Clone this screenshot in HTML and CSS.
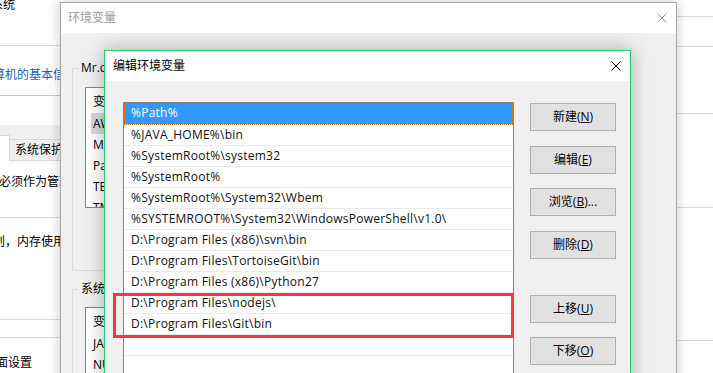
FILE: index.html
```html
<!doctype html>
<html lang="zh-CN">
    <head>
        <meta charset="UTF-8" />
        <title>编辑环境变量</title>
        <link rel="stylesheet" href="styles.css">
    </head>
    <body>
        <div class="desk">
            <!-- windows behind -->
            <div class="bg">
                <div class="bg-left">
                    <div class="cp-head"><span class="cp-crumb">系统</span></div>
                    <div class="cp-link"><span class="cp-link-text">计算机的基本信息</span></div>
                    <div class="sp-title"></div>
                    <div class="sp-tabs">
                        <div class="tab-sel"></div>
                        <div class="tab">系统保护</div>
                    </div>
                    <div class="sp-page">
                        <div class="pg pg-a"><span class="t-a">你必须作为管理员登录。</span></div>
                        <div class="pg pg-b"><span class="t-b">处理器计划，内存使用，以及虚拟内存</span></div>
                        <div class="pg pg-c"></div>
                        <div class="pg pg-d"><span class="t-d">桌面设置</span></div>
                    </div>
                </div>
                <div class="bg-right">
                    <div class="r r1"></div>
                    <div class="r r2"></div>
                    <div class="r r3"></div>
                    <div class="r r4"></div>
                    <div class="r r5"></div>
                </div>
            </div>

            <!-- 环境变量 -->
            <div class="win env">
                <div class="titlebar">
                    <span class="title">环境变量</span>
                    <span class="close">
                        <svg width="10" height="10" viewBox="0 0 10 10"><path d="M0.5 0.5L9.5 9.5M9.5 0.5L0.5 9.5" stroke="#9a9a9a" stroke-width="1" fill="none"/></svg>
                    </span>
                </div>
                <div class="env-body">
                    <fieldset class="group">
                        <legend>Mr.c 的用户变量(U)</legend>
                        <div class="lv">
                            <div class="lv-head">变量</div>
                            <div class="lv-row lv-sel">AWS_HOME</div>
                            <div class="lv-row">MAVEN_HOME</div>
                            <div class="lv-row">Path</div>
                            <div class="lv-row">TEMP</div>
                            <div class="lv-row">TMP</div>
                        </div>
                    </fieldset>
                    <fieldset class="group group-sys">
                        <legend>系统变量(S)</legend>
                        <div class="lv">
                            <div class="lv-head">变量</div>
                            <div class="lv-row">JAVA_HOME</div>
                            <div class="lv-row">NUMBER_OF_PROCESSORS</div>
                        </div>
                    </fieldset>
                </div>
            </div>

            <!-- 编辑环境变量 -->
            <div class="win edit">
                <div class="titlebar">
                    <span class="title">编辑环境变量</span>
                    <span class="close">
                        <svg width="10" height="10" viewBox="0 0 10 10"><path d="M0.5 0.5L9.5 9.5M9.5 0.5L0.5 9.5" stroke="#000" stroke-width="1" fill="none"/></svg>
                    </span>
                </div>
                <div class="edit-body">
                    <div class="lb">
                        <div class="lb-row sel">%Path%</div>
                        <div class="lb-row">%JAVA_HOME%\bin</div>
                        <div class="lb-row">%SystemRoot%\system32</div>
                        <div class="lb-row">%SystemRoot%</div>
                        <div class="lb-row">%SystemRoot%\System32\Wbem</div>
                        <div class="lb-row">%SYSTEMROOT%\System32\WindowsPowerShell\v1.0\</div>
                        <div class="lb-row">D:\Program Files (x86)\svn\bin</div>
                        <div class="lb-row">D:\Program Files\TortoiseGit\bin</div>
                        <div class="lb-row">D:\Program Files (x86)\Python27</div>
                        <div class="lb-row">D:\Program Files\nodejs\</div>
                        <div class="lb-row">D:\Program Files\Git\bin</div>
                        <div class="lb-row"></div>
                        <div class="lb-row"></div>
                    </div>
                    <div class="btns">
                        <div class="btn">新建(<u>N</u>)</div>
                        <div class="btn">编辑(<u>E</u>)</div>
                        <div class="btn">浏览(<u>B</u>)...</div>
                        <div class="btn">删除(<u>D</u>)</div>
                        <div class="btn btn-up">上移(<u>U</u>)</div>
                        <div class="btn">下移(<u>O</u>)</div>
                    </div>
                </div>
            </div>

            <div class="mark"></div>
        </div>
    </body>
</html>
```

FILE: styles.css
```css
* {
    box-sizing: border-box;
}

html,
body {
    margin: 0;
    padding: 0;
}

body {
    font-family: "Open Sans", "Noto Sans CJK SC", sans-serif;
    font-size: 12px;
    color: #000;
    background: #fff;
}

.desk {
    position: relative;
    width: 713px;
    height: 373px;
    overflow: hidden;
    background: #fff;
}

/* background windows */
.bg {
    display: flex;
    justify-content: space-between;
    height: 100%;
}

.bg-left {
    width: 70px;
    overflow: hidden;
    white-space: nowrap;
}

.cp-head {
    height: 46px;
    border-bottom: 1px solid #dadada;
}

.cp-crumb {
    display: block;
    line-height: 9px;
    margin-left: -9px;
}

.cp-link {
    height: 50px;
    padding-top: 21px;
    border-bottom: 1px solid #c8c8c8;
}

.cp-link-text {
    display: block;
    line-height: 16px;
    margin-left: -19px;
    color: #1a5fb4;
}

.sp-title {
    height: 29px;
    background: #fff;
}

.sp-tabs {
    display: flex;
    align-items: flex-end;
    height: 36px;
    background: #f0f0f0;
    border-bottom: 1px solid #d9d9d9;
}

.tab-sel {
    width: 16px;
    height: 26px;
    margin-bottom: -1px;
    background: #fff;
    border-top: 1px solid #d9d9d9;
    border-right: 1px solid #d9d9d9;
}

.tab {
    height: 21px;
    padding: 0 6px 0 5px;
    line-height: 20px;
    background: #f0f0f0;
    border-top: 1px solid #d9d9d9;
    border-right: 1px solid #d9d9d9;
}

.sp-page {
    background: #fff;
}

.pg {
    border-bottom: 1px solid #dcdcdc;
    line-height: 16px;
}

.pg span {
    display: block;
}

.pg-a {
    height: 57px;
    padding-top: 13px;
}

.t-a {
    margin-left: -13px;
}

.pg-b {
    height: 102px;
    padding-top: 16px;
}

.t-b {
    margin-left: -55px;
}

.pg-c {
    height: 18px;
}

.pg-d {
    border-bottom: none;
    padding-top: 17px;
}

.t-d {
    margin-left: -16px;
}

.bg-right {
    width: 36px;
}

.r {
    border-bottom: 1px solid #d9d9d9;
}

.r1 { height: 17px; }
.r2 { height: 30px; }
.r3 { height: 67px; }
.r4 { height: 94px; }
.r5 { height: 133px; }

/* dialogs */
.win {
    position: absolute;
    background: #f0f0f0;
}

.titlebar {
    display: flex;
    align-items: center;
    justify-content: space-between;
    height: 30px;
    background: #fff;
}

.title {
    line-height: 16px;
}

.close {
    display: flex;
    align-items: center;
    justify-content: center;
    width: 28px;
    height: 30px;
}

.env {
    left: 60px;
    top: 2px;
    width: 617px;
    height: 390px;
    border: 1px solid #aaaaaa;
    box-shadow: 0 0 12px rgba(0, 0, 0, 0.22);
}

.env .title {
    padding-left: 7px;
    color: #9a9a9a;
}

.env-body {
    padding: 0 60px 0 11px;
}

.group {
    margin: 27px 0 0;
    padding: 11px 12px 62px;
    border: 1px solid #dcdcdc;
    min-width: 0;
}

.group legend {
    padding: 0 2px;
    margin-left: -6px;
    line-height: 16px;
}

.group-sys {
    margin-top: 10px;
    padding-top: 10px;
}

.lv {
    height: 121px;
    overflow: hidden;
    background: #fff;
    border: 1px solid #828790;
    white-space: nowrap;
}

.lv-head {
    height: 25px;
    padding: 2px 0 0 7px;
    line-height: 23px;
}

.lv-row {
    height: 21px;
    margin-left: 5px;
    padding-left: 2px;
    line-height: 21px;
}

.lv-sel {
    background: #d9d9d9;
}

.edit {
    left: 104px;
    top: 50px;
    width: 527px;
    height: 340px;
    border: 1px solid #1ccf72;
    box-shadow: 0 0 18px rgba(0, 0, 0, 0.3);
}

.edit .title {
    padding-left: 8px;
}

.edit-body {
    display: flex;
    padding: 21px 0 0 18px;
}

.lb {
    width: 391px;
    height: 300px;
    padding-top: 1px;
    background: #fff;
    border: 1px solid #828790;
    white-space: nowrap;
}

.lb-row {
    height: 21px;
    padding-left: 7px;
    line-height: 20px;
    letter-spacing: 0.25px;
    color: #111;
    border-bottom: 1px solid #ebebeb;
}

.lb-row.sel {
    height: 22px;
    margin-top: -1px;
    background: #3399ff;
    color: #fff;
    outline: 1px dotted #cc6a00;
    outline-offset: -1px;
}

.btns {
    display: flex;
    flex-direction: column;
    margin-left: 16px;
    padding-top: 1px;
}

.btn {
    width: 86px;
    height: 28px;
    margin-top: 14px;
    line-height: 26px;
    text-align: center;
    background: #e1e1e1;
    border: 1px solid #adadad;
}

.btn:first-child {
    margin-top: 0;
}

.btn:nth-child(2),
.btn:nth-child(4) {
    margin-top: 15px;
}

.btn.btn-up {
    margin-top: 36px;
}

.mark {
    position: absolute;
    left: 113px;
    top: 293px;
    width: 401px;
    height: 45px;
    border: 3px solid #f53838;
}
```
